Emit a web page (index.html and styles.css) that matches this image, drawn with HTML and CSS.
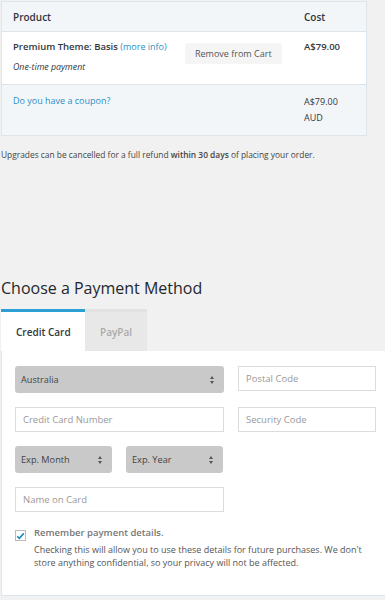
FILE: index.html
```html
<!DOCTYPE html>
<html lang="en">

<head>
    <meta charset="UTF-8">
    <meta name="viewport" content="width=device-width, initial-scale=1.0">
    <title>Checkout</title>
    <link rel="stylesheet" href="styles.css">
</head>

<body>
    <table class="cart">
        <thead>
            <tr>
                <th class="col-product">Product</th>
                <th></th>
                <th class="col-cost">Cost</th>
            </tr>
        </thead>
        <tbody>
            <tr>
                <td class="col-product">
                    <div class="item-name">Premium Theme: Basis <a href="#">(more info)</a></div>
                    <div class="item-note">One-time payment</div>
                </td>
                <td class="col-action">
                    <button class="remove">Remove from Cart</button>
                </td>
                <td class="col-cost price">A$79.00</td>
            </tr>
        </tbody>
        <tfoot>
            <tr>
                <td class="col-product"><a href="#">Do you have a coupon?</a></td>
                <td></td>
                <td class="col-cost">A$79.00<br>AUD</td>
            </tr>
        </tfoot>
    </table>

    <p class="refund">Upgrades can be cancelled for a full refund <strong>within 30 days</strong> of placing your order.</p>

    <h2 class="payment-title">Choose a Payment Method</h2>

    <div class="tabs">
        <div class="tab tab_active">Credit Card</div>
        <div class="tab">PayPal</div>
    </div>

    <form class="panel">
        <div class="row">
            <div class="select wide">Australia<span class="arrows"></span></div>
            <input class="field narrow" type="text" placeholder="Postal Code">
        </div>
        <div class="row">
            <input class="field wide" type="text" placeholder="Credit Card Number">
            <input class="field narrow" type="text" placeholder="Security Code">
        </div>
        <div class="row">
            <div class="select half">Exp. Month<span class="arrows"></span></div>
            <div class="select half">Exp. Year<span class="arrows"></span></div>
        </div>
        <div class="row">
            <input class="field wide" type="text" placeholder="Name on Card">
        </div>
        <div class="remember">
            <span class="check">
                <svg width="9" height="8" viewBox="0 0 9 8">
                    <path d="M1.2 4.3 L3.4 6.4 L7.8 1.4" fill="none" stroke="#1e8cbe" stroke-width="1.6" />
                </svg>
            </span>
            <div>
                <div class="remember-title">Remember payment details.</div>
                <div class="remember-text">Checking this will allow you to use these details for future purchases. We don't store anything confidential, so your privacy will not be affected.</div>
            </div>
        </div>
    </form>
</body>

</html>
```
FILE: styles.css
```css
body {
    margin: 0;
    font-family: "Open Sans", sans-serif;
    background-color: #f1f1f1;
    color: #32373c;
    font-size: 9px;
    width: 385px;
    overflow: hidden;
}

a {
    color: #2e8fc4;
    text-decoration: none;
}

.cart {
    margin: 1px 0 0 1px;
    width: 366px;
    border-collapse: collapse;
    border: 1px solid #dce4ec;
    background-color: white;
}

.cart th,
.cart td {
    text-align: left;
    vertical-align: top;
    padding: 0;
}

.cart thead th {
    background-color: #f3f6f9;
    font-size: 10px;
    font-weight: 600;
    height: 29px;
    vertical-align: middle;
    border-bottom: 1px solid #dce4ec;
}

.col-product {
    padding-left: 11px !important;
}

.col-cost {
    width: 62px;
}

.cart tbody td {
    padding-top: 8px;
    height: 44px;
    border-bottom: 1px solid #dce4ec;
}

.item-name {
    font-weight: 600;
    font-size: 9.5px;
}

.item-name a {
    font-weight: normal;
    font-size: 9px;
}

.item-note {
    font-style: italic;
    font-size: 8.8px;
    margin-top: 8px;
}

.price {
    font-weight: 600;
    font-size: 9.5px;
}

.col-action {
    width: 118px;
}

.remove {
    font-family: "Open Sans", sans-serif;
    font-size: 9px;
    color: #555;
    background-color: #f5f5f5;
    border: none;
    border-radius: 2px;
    padding: 0 10px;
    height: 21px;
    margin-top: 3px;
    margin-left: -1px;
}

.cart tfoot td {
    background-color: #f3f6f9;
    padding-top: 9px;
    height: 41px;
    line-height: 16px;
    font-size: 9px;
}

.cart tfoot td:first-child {
    line-height: 14px;
}

.refund {
    margin: 13px 0 0 1px;
    font-size: 8.4px;
    color: #444;
}

.refund strong {
    font-weight: 600;
}

.payment-title {
    margin: 116px 0 0 1px;
    font-weight: normal;
    font-size: 16px;
    color: #23282d;
    line-height: 24px;
}

.tabs {
    display: flex;
    margin: 9px 0 0 1px;
}

.tab {
    box-sizing: border-box;
    height: 42px;
    display: flex;
    align-items: center;
    white-space: nowrap;
    font-size: 10px;
    font-weight: 600;
    color: #aaa;
    background-color: #e8e8e8;
    border-top: 3px solid #e2e2e2;
    padding: 0 15px;
    width: 62px;
}

.tab_active {
    width: 84px;
    background-color: white;
    color: #32373c;
    border-top-color: #2e9fd3;
}

.panel {
    margin: 0 0 0 1px;
    background-color: white;
    border-left: 1px solid #e4e4e4;
    border-bottom: 1px solid #dce4ec;
    padding: 15px 0 26px 13px;
    display: flex;
    flex-direction: column;
    gap: 14px;
}

.row {
    display: flex;
    gap: 14px;
}

.wide {
    width: 209px;
}

.narrow {
    width: 138px;
}

.half {
    width: 97px;
}

.select {
    box-sizing: border-box;
    height: 27px;
    background-color: #c9c9c9;
    border-radius: 3px;
    padding: 0 0 0 6px;
    display: flex;
    align-items: center;
    justify-content: space-between;
    font-size: 9.2px;
    color: #444;
}

.arrows {
    width: 5px;
    height: 8px;
    margin-right: 9px;
    position: relative;
}

.arrows::before,
.arrows::after {
    content: "";
    position: absolute;
    left: 0;
    border-left: 2.5px solid transparent;
    border-right: 2.5px solid transparent;
}

.arrows::before {
    top: 0;
    border-bottom: 3px solid #555;
}

.arrows::after {
    bottom: 0;
    border-top: 3px solid #555;
}

.field {
    box-sizing: border-box;
    height: 25px;
    border: 1px solid #dcdcdc;
    background-color: white;
    font-family: "Open Sans", sans-serif;
    font-size: 9.5px;
    padding: 0 7px;
    margin: 0;
    outline: none;
}

.field::placeholder {
    color: #999;
}

.remember {
    display: flex;
    gap: 8px;
    margin-top: 0;
    padding-right: 14px;
}

.check {
    box-sizing: border-box;
    width: 11px;
    height: 11px;
    border: 1px solid #bbb;
    display: flex;
    align-items: center;
    justify-content: center;
    flex-shrink: 0;
    margin-top: 4px;
}

.remember-title {
    font-weight: 600;
    font-size: 9.5px;
    color: #777;
    line-height: 14px;
}

.remember-text {
    font-size: 9px;
    color: #555;
    line-height: 13px;
    margin-top: 3px;
}
```
